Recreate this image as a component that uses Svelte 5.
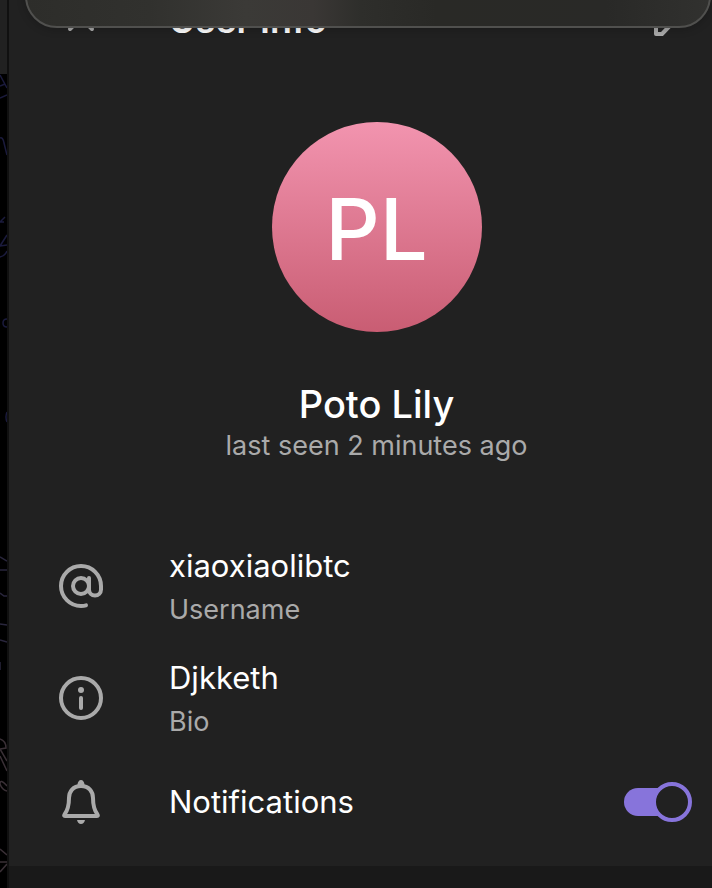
<script>
    const user = {
        name: 'Poto Lily',
        initials: 'PL',
        status: 'last seen 2 minutes ago',
    };

    const details = [
        { icon: 'username', value: 'xiaoxiaolibtc', label: 'Username' },
        { icon: 'info', value: 'Djkketh', label: 'Bio' },
    ];

    let notifications = $state(true);
</script>

<div class="app">
    <div class="chat">
        <div class="chat-header"></div>
        <svg class="pattern" width="7" height="814" viewBox="0 74 7 814" fill="none">
            <g stroke="#1b1b3d" stroke-width="1.5">
                <path d="M0 75l7 13M0 86l5-2M0 98l7-3M0 138q3-1 4 5l3 12M5 217l-5 5h4M7 235l-7 11 7-1M0 257q5-1 7-6" />
                <path d="M7 319q-4 0-4 4t4 4M7 412q-2 5 0 10" />
            </g>
            <g stroke="#29263c" stroke-width="1.5">
                <path d="M0 557l7 4M0 570h7M0 593l4 3h3M0 624l7 1M0 640l7 2M0 662v8" />
            </g>
            <g stroke="#3a3036" stroke-width="1.5">
                <path d="M0 739q6 2 6 9l-6 1 7 12M0 756l7 15M7 786q-7-8-7-2 2 6 7 7M0 849l7 6M0 862h7M0 872l7-8" />
            </g>
        </svg>
    </div>

    <main class="panel">
        <header class="header">
            <button class="icon-button" aria-label="Close">
                <svg class="icon" viewBox="0 0 48 48">
                    <path d="M13 11l22 22M35 11L13 33" />
                </svg>
            </button>
            <h1>User Info</h1>
            <button class="icon-button" aria-label="Edit">
                <svg class="icon" viewBox="0 0 48 48">
                    <path d="M12 38v-9L31 10l7 7-20 21z" />
                </svg>
            </button>
        </header>

        <section class="profile">
            <div class="avatar">{user.initials}</div>
            <h2>{user.name}</h2>
            <p>{user.status}</p>
        </section>

        <section class="details">
            {#each details as item}
                <div class="row">
                    <svg class="icon" viewBox="0 0 48 48">
                        {#if item.icon === 'username'}
                            <circle cx="24" cy="24" r="8" />
                            <path d="M32 16v11.500a5.800 5.800 0 0 0 12 0V24a20 20 0 1 0-20 20q3 0 5-.6" />
                        {:else}
                            <circle cx="24" cy="24" r="20" />
                            <circle cx="24" cy="16" r="3" fill="#aaaaaa" stroke="none" />
                            <path d="M24 24v10" />
                        {/if}
                    </svg>
                    <div class="text">
                        <span class="value">{item.value}</span>
                        <span class="label">{item.label}</span>
                    </div>
                </div>
            {/each}

            <div class="row notifications">
                <svg class="icon" viewBox="0 0 48 48">
                    <path d="M24 8C16 8 12 13.500 12 20C12 28 11 32 7.500 36.500Q6.500 38 8 38H40Q41.500 38 40.500 36.500C37 32 36 28 36 20C36 13.500 32 8 24 8Z" />
                    <path d="M20.500 7a3.500 5 0 0 1 7 0zM20 42h8q-1 4-4 4t-4-4z" fill="#aaaaaa" stroke="none" />
                </svg>
                <label class="value" for="notifications">Notifications</label>
                <input id="notifications" type="checkbox" role="switch" bind:checked={notifications} />
            </div>
        </section>
    </main>

    <div class="overlay"></div>
</div>

<style>
    :global(body) {
        background: #191919;
    }

    .app {
        position: relative;
        display: flex;
        min-height: 100vh;
        overflow: hidden;
        font-family: Inter, "Liberation Sans", sans-serif;
        color: #ffffff;
    }

    .chat {
        width: 7px;
        flex-shrink: 0;
        background: #000000;
        border-right: 2px solid #101010;
    }

    .chat-header {
        height: 74px;
        background: #212121;
    }

    .pattern {
        display: block;
    }

    .panel {
        flex: 1;
        min-width: 0;
    }

    .header {
        display: flex;
        align-items: center;
        height: 40px;
        padding: 0 20px 0 48px;
        background: #212121;
    }

    h1 {
        flex: 1;
        margin: 0 0 0 64px;
        font-size: 36px;
        line-height: 40px;
        font-weight: 600;
    }

    .icon-button {
        padding: 0;
        border: 0;
        background: none;
        cursor: pointer;
    }

    .icon {
        display: block;
        width: 48px;
        height: 48px;
        flex-shrink: 0;
        fill: none;
        stroke: #aaaaaa;
        stroke-width: 4;
        stroke-linecap: round;
        stroke-linejoin: round;
    }

    .profile {
        display: flex;
        flex-direction: column;
        align-items: center;
        padding: 82px 0 68px 32px;
        background: #212121;
    }

    .avatar {
        display: flex;
        align-items: center;
        justify-content: center;
        box-sizing: border-box;
        width: 210px;
        height: 210px;
        padding-top: 4px;
        border-radius: 50%;
        background: linear-gradient(#f294af, #c95d73);
        font-size: 85px;
        font-weight: 500;
    }

    h2 {
        margin: 48px 0 0;
        font-size: 38px;
        line-height: 48px;
        font-weight: 500;
    }

    p {
        margin: 2px 0 0;
        font-size: 27px;
        line-height: 32px;
        color: #aaaaaa;
    }

    .details {
        padding-bottom: 16px;
        background: #212121;
    }

    .row {
        display: flex;
        align-items: center;
        gap: 64px;
        height: 112px;
        padding: 0 20px 0 48px;
    }

    .text {
        display: flex;
        flex-direction: column;
        gap: 8px;
    }

    .value {
        font-size: 31px;
        line-height: 40px;
    }

    .label {
        font-size: 27px;
        line-height: 32px;
        color: #aaaaaa;
    }

    .notifications {
        height: 96px;
    }

    .notifications .value {
        flex: 1;
    }

    input {
        position: relative;
        appearance: none;
        width: 68px;
        height: 40px;
        margin: 0;
        cursor: pointer;
    }

    input::before {
        content: '';
        position: absolute;
        inset: 6px 8px 6px 0;
        border-radius: 14px;
        background: #717579;
    }

    input::after {
        content: '';
        position: absolute;
        top: 0;
        left: 0;
        box-sizing: border-box;
        width: 40px;
        height: 40px;
        border: 4px solid #717579;
        border-radius: 50%;
        background: #212121;
    }

    input:checked::before {
        background: #8774db;
    }

    input:checked::after {
        left: auto;
        right: 0;
        border-color: #8774db;
    }

    .overlay {
        position: absolute;
        top: -60px;
        left: 25px;
        right: 1px;
        box-sizing: border-box;
        height: 88px;
        border: 2px solid #50504e;
        border-radius: 32px;
        background: linear-gradient(90deg, #2d2d2a, #31312e 18%, #3b3a37 32%, #3a3735 42%, #2e2e2b 49%, #292926 60%, #292927 85%, #31312f);
        box-shadow: 0 2px 8px rgba(0, 0, 0, 0.2);
    }
</style>
